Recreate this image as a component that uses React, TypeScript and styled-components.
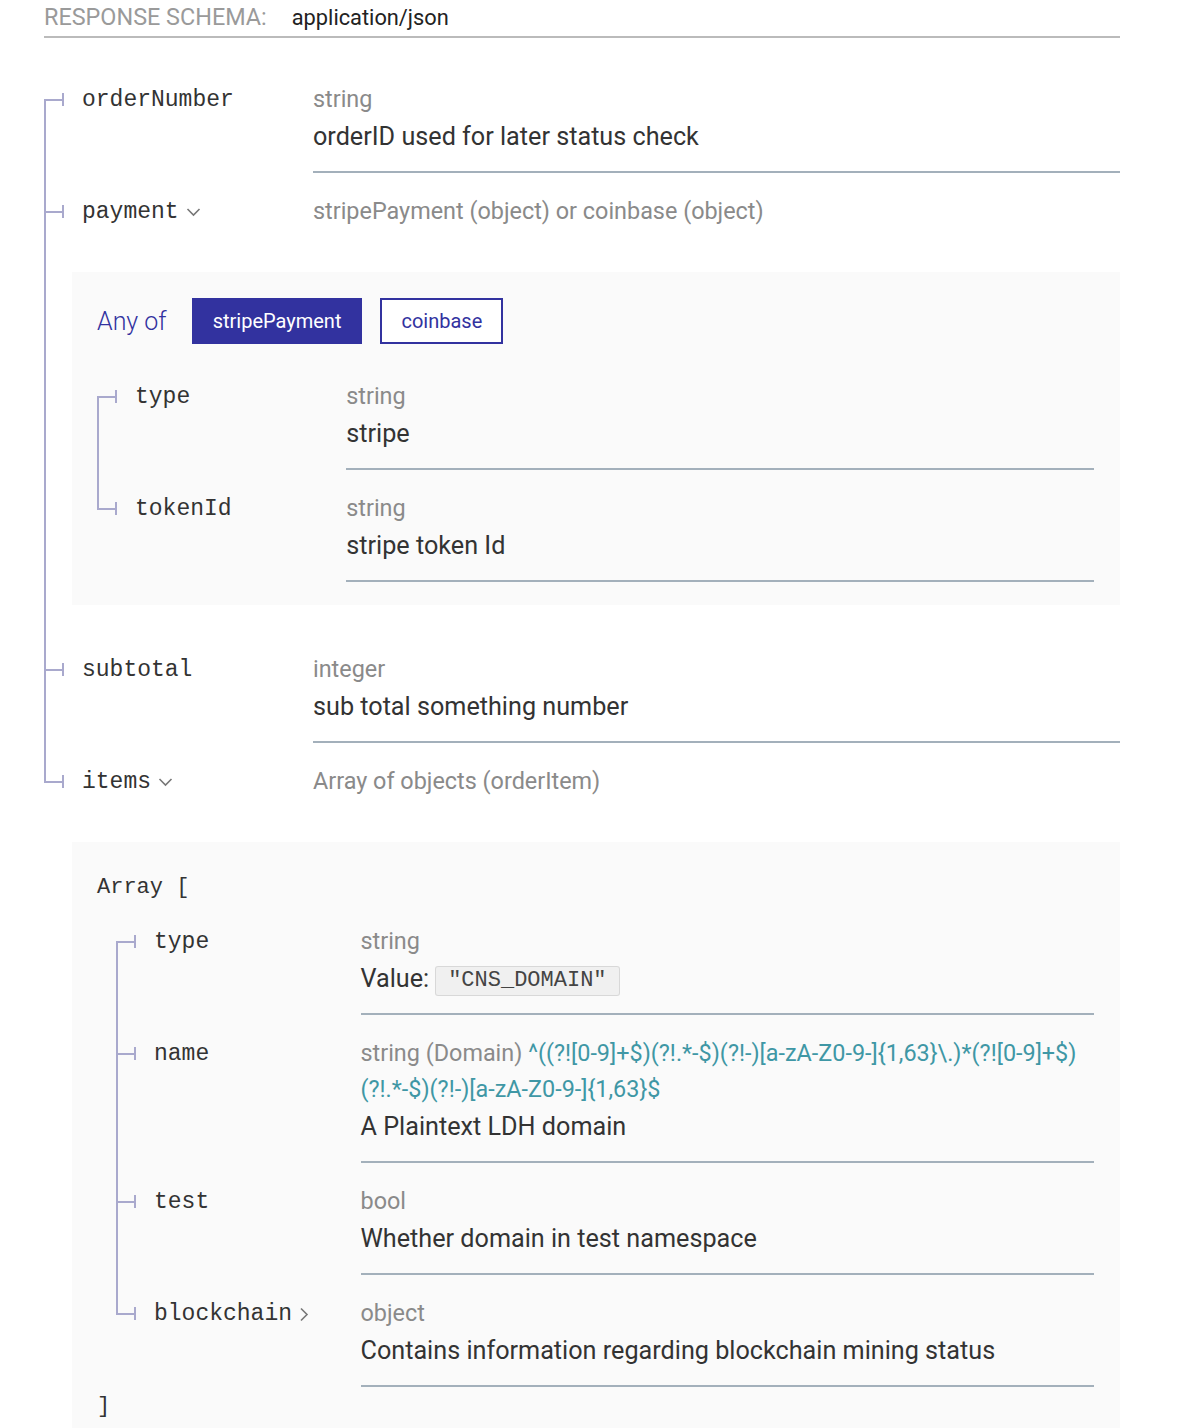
import { ReactNode } from "react";
import styled, { createGlobalStyle, css } from "styled-components";

const LINE = "#a9a9cd";
const PRIMARY = "#32329f";
const MONO = `"Liberation Mono", Courier, monospace`;

const GlobalStyle = createGlobalStyle`
  body {
    margin: 0;
    background: #ffffff;
    font-family: Roboto, "Liberation Sans", sans-serif;
    color: #333333;
  }
`;

const Page = styled.div`
  width: 1076px;
  margin-left: 44px;
`;

const Header = styled.div`
  display: flex;
  align-items: baseline;
  gap: 25px;
  height: 36px;
  line-height: 34px;
  border-bottom: 2px solid #bbbbbb;
`;

const HeaderLabel = styled.span`
  font-size: 23.4px;
  color: #9a9a9a;
  text-transform: uppercase;
`;

const HeaderValue = styled.span`
  font-size: 21.8px;
  color: #222222;
`;

const Fields = styled.div<{ $top?: number; $indent?: number }>`
  margin-top: ${p => p.$top ?? 0}px;
  margin-left: ${p => p.$indent ?? 0}px;
`;

type Pos = "first" | "middle" | "last";

const Row = styled.div`
  display: flex;
  align-items: stretch;
`;

const NameCell = styled.div<{ $pos: Pos }>`
  position: relative;
  box-sizing: border-box;
  flex: none;
  width: 25%;
  padding: 21px 0 0 38px;
  line-height: 36px;
  white-space: nowrap;

  &::before {
    content: "";
    position: absolute;
    left: 0;
    width: 2px;
    background: ${LINE};
    ${p =>
      p.$pos === "first"
        ? css`top: 39px; bottom: 0;`
        : p.$pos === "last"
        ? css`top: 0; height: 40px;`
        : css`top: 0; bottom: 0;`}
  }

  &::after {
    content: "";
    position: absolute;
    left: 0;
    top: 32px;
    width: 20px;
    height: 13px;
    background:
      linear-gradient(${LINE}, ${LINE}) 0 6px / 100% 2px no-repeat,
      linear-gradient(${LINE}, ${LINE}) 100% 0 / 2px 100% no-repeat;
  }
`;

const PropName = styled.span`
  font-family: ${MONO};
  font-size: 23px;
  color: #333333;
`;

const Chevron = styled.svg`
  margin-left: 7px;
  vertical-align: 1px;
`;

const DetailCell = styled.div<{ $open?: boolean }>`
  box-sizing: border-box;
  flex: 1;
  min-width: 0;
  padding: 20px 0 18px;
  border-bottom: 2px solid #a3b0bb;
  ${p => p.$open && css`border-bottom: none;`}
`;

const TypeLine = styled.div`
  font-size: 23.4px;
  line-height: 36px;
  color: #8a8a8a;
`;

const Pattern = styled.span`
  color: #3f97a5;
`;

const Description = styled.div`
  margin-top: 2px;
  margin-bottom: -2px;
  font-size: 25.2px;
  line-height: 36px;
  color: #333333;
`;

const ConstValue = styled.span`
  display: inline-block;
  margin-left: 6px;
  padding: 0 12px;
  font-family: ${MONO};
  font-size: 22px;
  line-height: 28px;
  color: #444444;
  background: rgba(51, 51, 51, 0.05);
  border: 1px solid rgba(51, 51, 51, 0.12);
  border-radius: 3px;
  vertical-align: 1px;
`;

const NestedRow = styled.div<{ $line: boolean }>`
  padding: 25px 0 26px 26px;
  ${p =>
    p.$line
      ? css`border-left: 2px solid ${LINE};`
      : css`padding-left: 28px;`}
`;

const Panel = styled.div<{ $top: number; $bottom: number }>`
  background: #fafafa;
  padding: ${p => p.$top}px 26px ${p => p.$bottom}px 25px;
`;

const AnyOfBar = styled.div`
  display: flex;
  align-items: center;
  height: 46px;
`;

const AnyOfLabel = styled.span`
  margin-right: 25px;
  font-size: 25px;
  font-weight: 300;
  color: ${PRIMARY};
`;

const VariantButton = styled.button<{ $active?: boolean }>`
  box-sizing: border-box;
  height: 46px;
  margin-right: 18px;
  padding: 0 19px;
  font-family: Roboto, "Liberation Sans", sans-serif;
  font-size: 20px;
  border: 2px solid ${PRIMARY};
  border-radius: 0;
  background: ${p => (p.$active ? PRIMARY : "#ffffff")};
  color: ${p => (p.$active ? "#ffffff" : PRIMARY)};
`;

const Bracket = styled.div<{ $gap?: number }>`
  font-family: ${MONO};
  font-size: 22px;
  line-height: 28px;
  color: #333333;
  margin-top: ${p => p.$gap ?? 0}px;
`;

type FieldProps = {
  name: string;
  pos: Pos;
  toggle?: "down" | "right";
  type: ReactNode;
  description?: ReactNode;
  open?: boolean;
};

function Field(props: Readonly<FieldProps>) {
  return (
    <Row>
      <NameCell $pos={props.pos}>
        <PropName>{props.name}</PropName>
        {props.toggle === "down" && (
          <Chevron width="15" height="10" viewBox="0 0 15 10">
            <polyline points="1.5,2 7.5,8 13.5,2" fill="none" stroke="#777" strokeWidth="1.6" />
          </Chevron>
        )}
        {props.toggle === "right" && (
          <Chevron width="10" height="15" viewBox="0 0 10 15" style={{ verticalAlign: "-2px" }}>
            <polyline points="2,1.5 8,7.5 2,13.5" fill="none" stroke="#777" strokeWidth="1.6" />
          </Chevron>
        )}
      </NameCell>
      <DetailCell $open={props.open}>
        <TypeLine>{props.type}</TypeLine>
        {props.description && <Description>{props.description}</Description>}
      </DetailCell>
    </Row>
  );
}

const DOMAIN_PATTERN =
  "^((?![0-9]+$)(?!.*-$)(?!-)[a-zA-Z0-9-]{1,63}\\.)*(?![0-9]+$)(?!.*-$)(?!-)[a-zA-Z0-9-]{1,63}$";

export default function App() {
  return (
    <>
      <GlobalStyle />
      <Page>
        <Header>
          <HeaderLabel>Response Schema:</HeaderLabel>
          <HeaderValue>application/json</HeaderValue>
        </Header>

        <Fields $top={23}>
          <Field
            name="orderNumber"
            pos="first"
            type="string"
            description="orderID used for later status check"
          />
          <Field
            name="payment"
            pos="middle"
            toggle="down"
            type="stripePayment (object) or coinbase (object)"
            open
          />
          <NestedRow $line>
            <Panel $top={26} $bottom={23}>
              <AnyOfBar>
                <AnyOfLabel>Any of</AnyOfLabel>
                <VariantButton $active>stripePayment</VariantButton>
                <VariantButton>coinbase</VariantButton>
              </AnyOfBar>
              <Fields $top={14}>
                <Field name="type" pos="first" type="string" description="stripe" />
                <Field name="tokenId" pos="last" type="string" description="stripe token Id" />
              </Fields>
            </Panel>
          </NestedRow>
          <Field
            name="subtotal"
            pos="middle"
            type="integer"
            description="sub total something number"
          />
          <Field
            name="items"
            pos="last"
            toggle="down"
            type="Array of objects (orderItem)"
            open
          />
          <NestedRow $line={false}>
            <Panel $top={32} $bottom={40}>
              <Bracket>Array [</Bracket>
              <Fields $top={1} $indent={19}>
                <Field
                  name="type"
                  pos="first"
                  type="string"
                  description={
                    <>
                      Value:<ConstValue>"CNS_DOMAIN"</ConstValue>
                    </>
                  }
                />
                <Field
                  name="name"
                  pos="middle"
                  type={
                    <>
                      string (Domain) <Pattern>{DOMAIN_PATTERN}</Pattern>
                    </>
                  }
                  description="A Plaintext LDH domain"
                />
                <Field
                  name="test"
                  pos="middle"
                  type="bool"
                  description="Whether domain in test namespace"
                />
                <Field
                  name="blockchain"
                  pos="last"
                  toggle="right"
                  type="object"
                  description="Contains information regarding blockchain mining status"
                />
              </Fields>
              <Bracket $gap={6}>]</Bracket>
            </Panel>
          </NestedRow>
        </Fields>
      </Page>
    </>
  );
}
